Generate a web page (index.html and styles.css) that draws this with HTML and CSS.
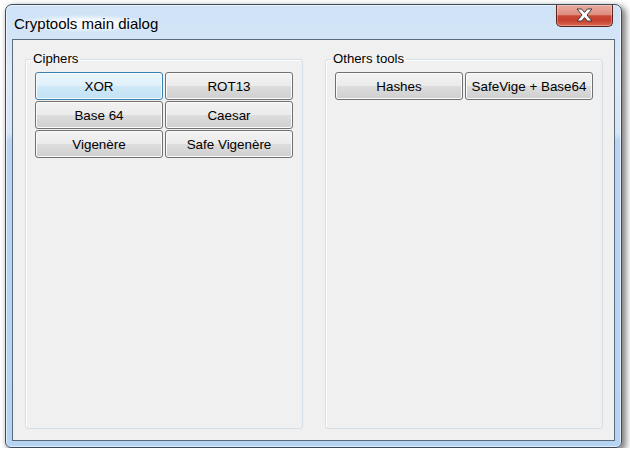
FILE: index.html
```html
<!DOCTYPE html>
<html>
<head>
<meta charset="utf-8">
<title>Cryptools main dialog</title>
<link rel="stylesheet" href="styles.css">
</head>
<body>
<div class="window">
  <div class="titlebar">
    <span class="title">Cryptools main dialog</span>
    <button class="close" aria-label="Close">
      <svg width="17" height="14" viewBox="0 0 17 14">
        <path d="M1,1 H5.6 L8.5,4.4 L11.4,1 H16 L11,7 L16,13 H11.4 L8.5,9.6 L5.6,13 H1 L6,7 Z" fill="#fff" stroke="#3a3a3a" stroke-width="1" stroke-linejoin="round"/>
      </svg>
    </button>
  </div>
  <div class="client">
    <fieldset class="group">
      <legend>Ciphers</legend>
      <div class="buttons">
        <button class="btn btn-default">XOR</button>
        <button class="btn">ROT13</button>
        <button class="btn">Base 64</button>
        <button class="btn">Caesar</button>
        <button class="btn">Vigenère</button>
        <button class="btn">Safe Vigenère</button>
      </div>
    </fieldset>
    <fieldset class="group">
      <legend>Others tools</legend>
      <div class="buttons">
        <button class="btn">Hashes</button>
        <button class="btn">SafeVige + Base64</button>
      </div>
    </fieldset>
  </div>
</div>
</body>
</html>
```
FILE: styles.css
```css
html, body {
  margin: 0;
  background: #ffffff;
}

body {
  padding: 4px 0 0 5px;
  font-family: "Liberation Sans", Arial, sans-serif;
}

.window {
  width: 617px;
  height: 444px;
  box-sizing: border-box;
  border: 1px solid #3b4b5d;
  border-radius: 7px 7px 6px 6px;
  padding: 0 6px 6px;
  display: flex;
  flex-direction: column;
  background:
    linear-gradient(to bottom,
      #cfe2f6 0px,
      #d3e5f7 34px,
      #dbe9f8 60px,
      #d6e6f7 128px,
      #b9d5f3 136px,
      #b5d3f3 100%);
  box-shadow: 3px 3px 6px 1px rgba(0, 0, 0, 0.5),
              inset 0 0 0 1px rgba(255, 255, 255, 0.6);
}

.titlebar {
  height: 34px;
  display: flex;
  align-items: flex-start;
}

.title {
  margin-top: 10px;
  padding-left: 2px;
  font-size: 15px;
  line-height: 17px;
  color: #000;
  background: radial-gradient(ellipse at center, rgba(255, 255, 255, 0.85) 30%, rgba(255, 255, 255, 0) 72%);
}

.close {
  margin-left: auto;
  margin-right: 2px;
  width: 57px;
  height: 22px;
  padding: 0;
  display: flex;
  align-items: center;
  justify-content: center;
  border: 1px solid #5a221b;
  border-top: none;
  border-radius: 0 0 5px 5px;
  background: linear-gradient(to bottom,
    #e9ab9e 0%,
    #df8f80 45%,
    #c84735 52%,
    #c8412f 75%,
    #d86a55 100%);
  box-shadow: inset 0 0 0 1px rgba(255, 255, 255, 0.3);
}

.close svg {
  display: block;
  margin-top: -1px;
}

.client {
  flex: 1;
  border: 1px solid #5b6b7c;
  background: #f0f0f0;
  display: grid;
  grid-template-columns: 278px 278px;
  column-gap: 22px;
  padding: 12px 11px 11px 12px;
}

.group {
  margin: 0;
  padding: 6px 9px 0;
  min-width: 0;
  border: 1px solid #d5dfe5;
  border-radius: 3px;
  box-shadow: inset 1px 1px 0 #fff;
}

.group legend {
  margin-left: -4px;
  padding: 0 2px;
  font-size: 13.2px;
  line-height: 14px;
  color: #000;
}

.buttons {
  display: grid;
  grid-template-columns: 128px 128px;
  grid-auto-rows: 28px;
  column-gap: 2px;
  row-gap: 1px;
}

.btn {
  padding: 0;
  margin: 0;
  font-family: "Liberation Sans", Arial, sans-serif;
  font-size: 13.4px;
  color: #000;
  border: 1px solid #707070;
  border-radius: 3px;
  background: linear-gradient(to bottom,
    #f2f2f2 0%,
    #ebebeb 50%,
    #dddddd 50%,
    #cfcfcf 100%);
  box-shadow: inset 0 0 0 1px #fbfbfb;
}

.btn-default {
  border-color: #3c7fb1;
  background: linear-gradient(to bottom,
    #e9f5fc 0%,
    #e0f1fb 50%,
    #cfe9f7 50%,
    #c2e2f4 100%);
  box-shadow: inset 0 0 0 1px #f4fbfe;
}
```
